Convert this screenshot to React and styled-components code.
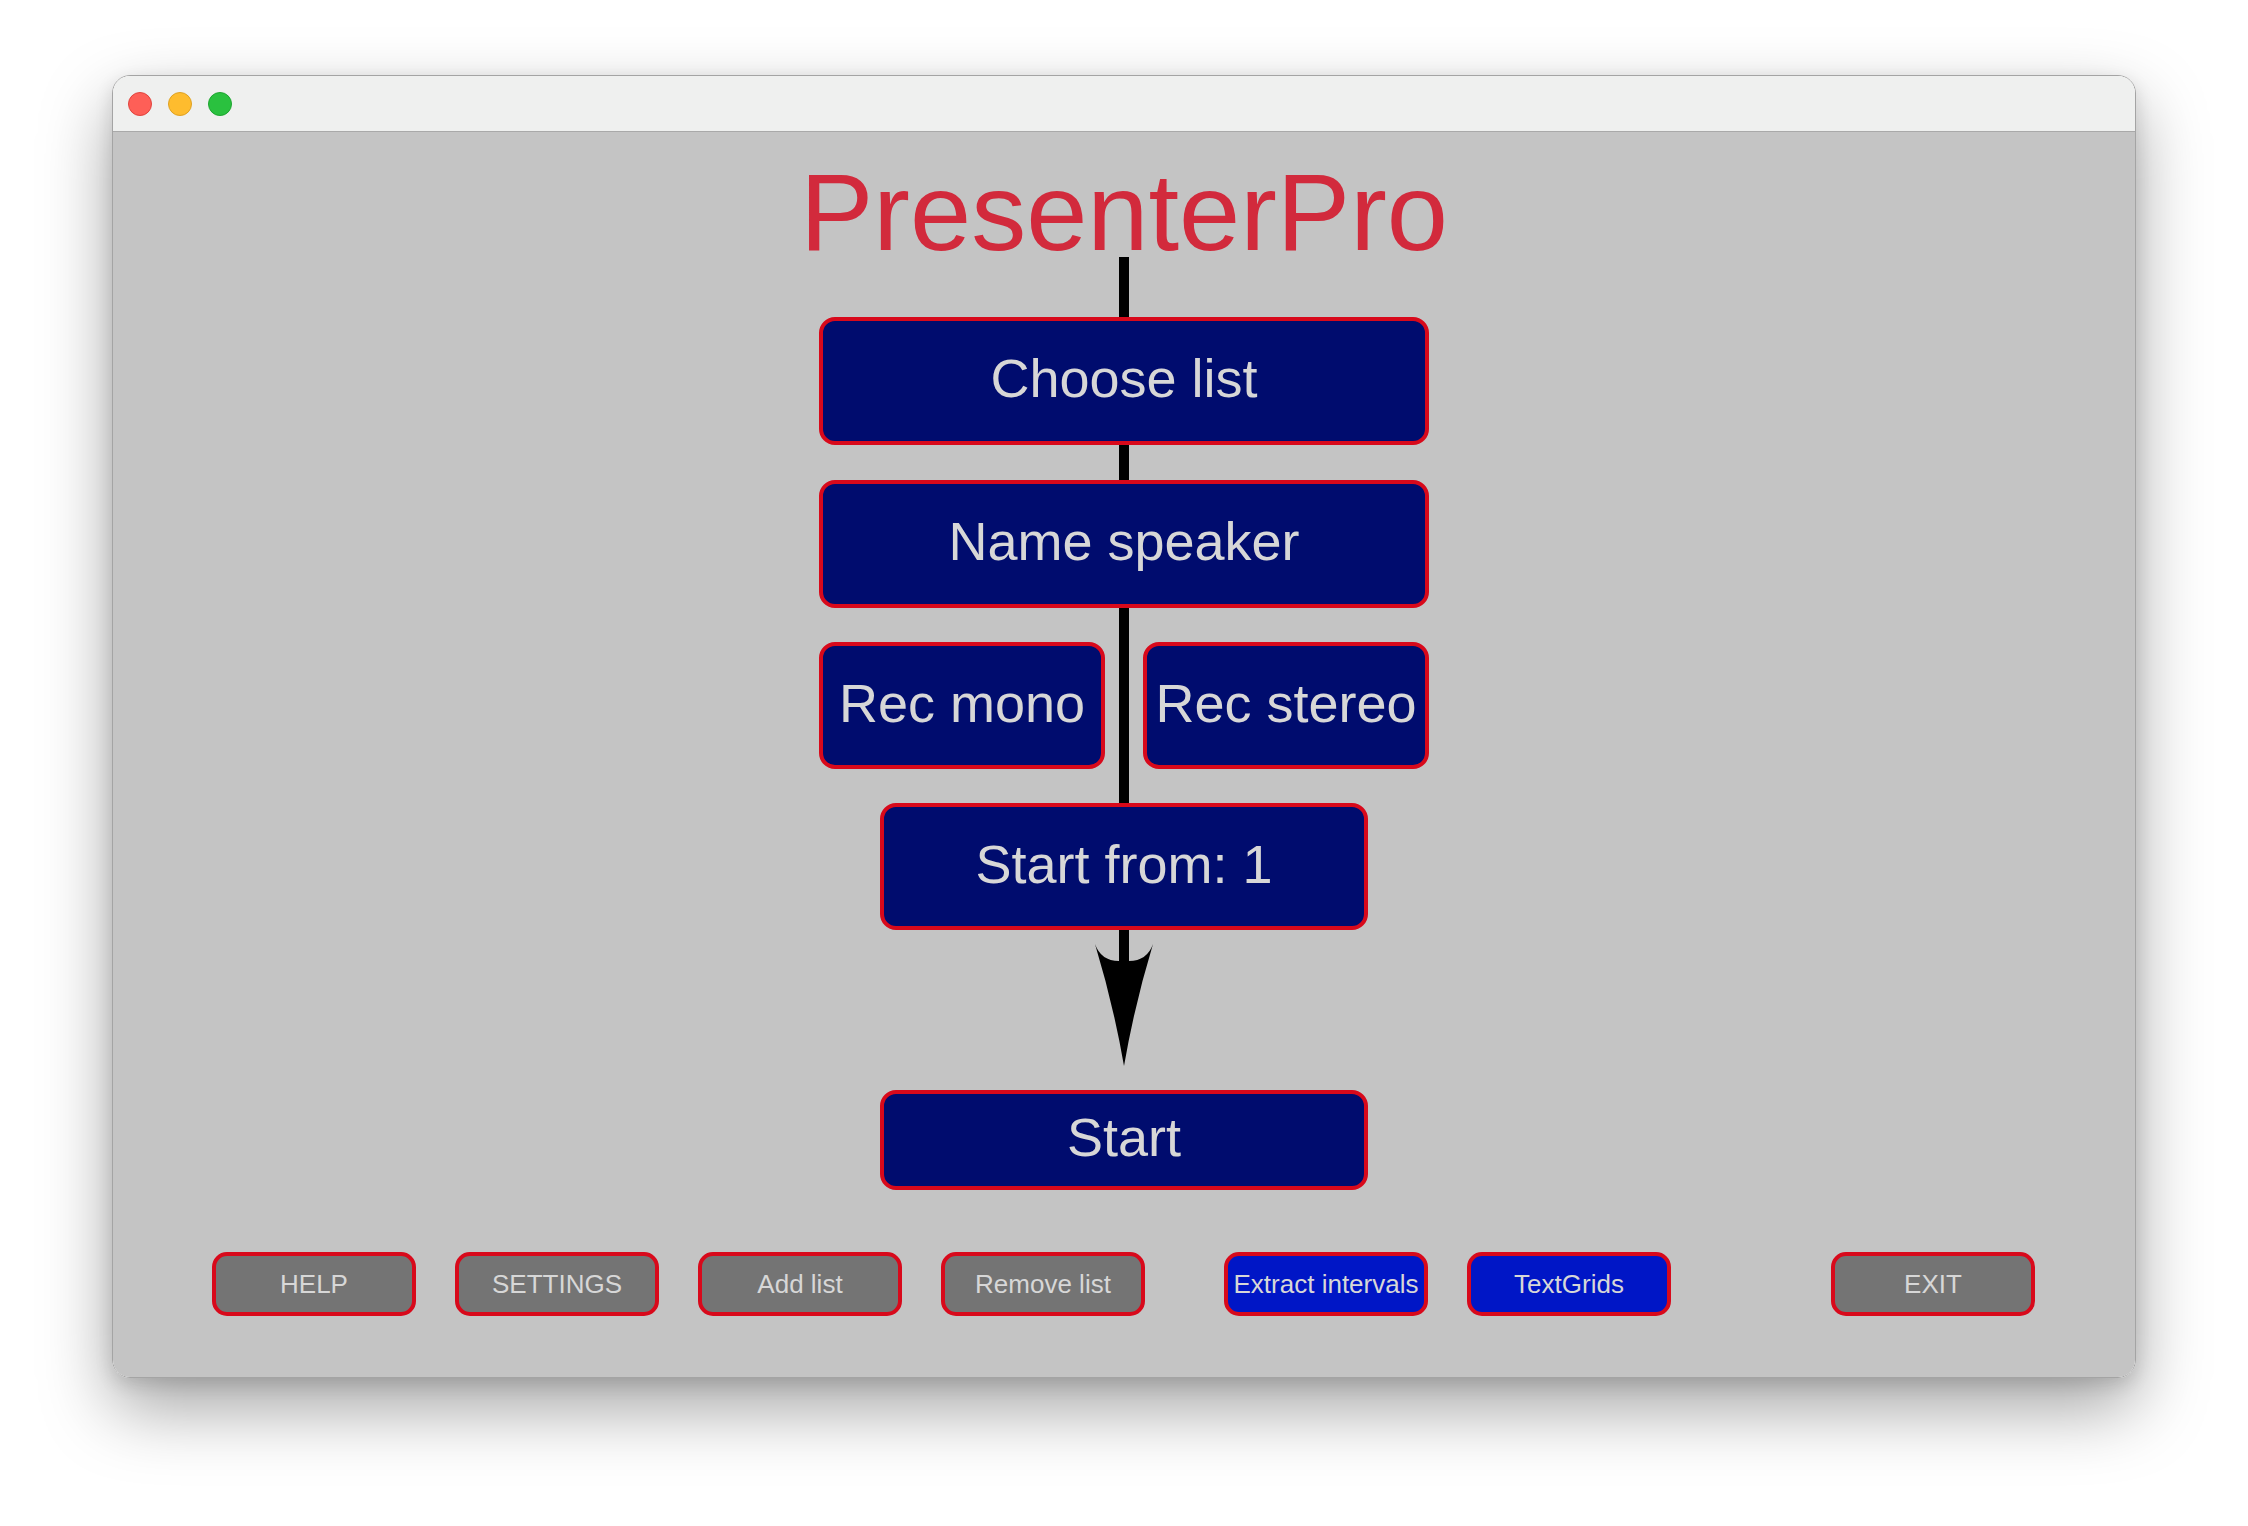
import React from 'react';
import styled, { createGlobalStyle } from 'styled-components';

const GlobalStyle = createGlobalStyle`
  html, body {
    margin: 0;
    padding: 0;
    background: #ffffff;
  }
  body {
    font-family: 'Liberation Sans', Arial, sans-serif;
  }
`;

const Page = styled.div`
  padding: 75px 0 148px 112px;
`;

const Window = styled.div`
  width: 2024px;
  height: 1303px;
  box-sizing: border-box;
  border: 1px solid #a4a4a4;
  border-radius: 18px;
  overflow: hidden;
  display: flex;
  flex-direction: column;
  box-shadow: 0 30px 70px rgba(0, 0, 0, 0.36), 0 6px 18px rgba(0, 0, 0, 0.12);
`;

const TitleBar = styled.div`
  height: 55px;
  flex: none;
  display: flex;
  align-items: center;
  gap: 16px;
  padding-left: 15px;
  background: #eff0ef;
  border-bottom: 1px solid #a9a9a9;
`;

const Light = styled.span`
  width: 24px;
  height: 24px;
  border-radius: 50%;
  box-sizing: border-box;
  background: ${(p) => p.$color};
  border: 1px solid ${(p) => p.$edge};
`;

const Content = styled.div`
  flex: 1;
  background: #c4c4c4;
  display: flex;
  flex-direction: column;
  align-items: center;
  padding-top: 35px;
`;

const Title = styled.h1`
  margin: 0;
  font-size: 110px;
  line-height: 90px;
  font-weight: 400;
  color: #d22a3c;
  white-space: nowrap;
`;

const Connector = styled.div`
  width: 10px;
  height: ${(p) => (p.$h ? `${p.$h}px` : 'auto')};
  align-self: ${(p) => (p.$h ? 'center' : 'stretch')};
  background: #000;
  flex: none;
`;

const FlowButton = styled.button`
  width: ${(p) => p.$w}px;
  height: ${(p) => p.$h}px;
  box-sizing: border-box;
  flex: none;
  margin: 0;
  padding: 0 0 6px;
  display: flex;
  align-items: center;
  justify-content: center;
  background: #000c6e;
  border: 4px solid #d8091b;
  border-radius: 16px;
  color: #d7d7d7;
  font-family: inherit;
  font-size: 54px;
  white-space: nowrap;
  cursor: pointer;
`;

const RecRow = styled.div`
  width: 610px;
  display: flex;
  gap: 14px;
`;

const Arrow = styled.svg`
  display: block;
  flex: none;
  margin-bottom: 24px;
`;

const BottomRow = styled.div`
  align-self: stretch;
  display: flex;
  padding-left: 99px;
  margin-top: 62px;
`;

const SmallButton = styled.button`
  width: 204px;
  height: 64px;
  box-sizing: border-box;
  margin: 0 0 0 ${(p) => p.$offset || 0}px;
  padding: 0;
  display: flex;
  align-items: center;
  justify-content: center;
  background: ${(p) => (p.$blue ? '#0016c6' : '#747474')};
  border: 4px solid #d8091b;
  border-radius: 15px;
  color: #d7d7d7;
  font-family: inherit;
  font-size: 26px;
  white-space: nowrap;
  cursor: pointer;
`;

const bottomButtons = [
  { label: 'HELP', offset: 0 },
  { label: 'SETTINGS', offset: 39 },
  { label: 'Add list', offset: 39 },
  { label: 'Remove list', offset: 39 },
  { label: 'Extract intervals', offset: 79, blue: true },
  { label: 'TextGrids', offset: 39, blue: true },
  { label: 'EXIT', offset: 160 },
];

const App = () => (
  <Page>
    <GlobalStyle />
    <Window>
      <TitleBar>
        <Light $color="#fe5f57" $edge="#e0443e" />
        <Light $color="#febc2e" $edge="#dea123" />
        <Light $color="#2ac13f" $edge="#1ea530" />
      </TitleBar>
      <Content>
        <Title>PresenterPro</Title>
        <Connector $h={60} />
        <FlowButton $w={610} $h={128}>Choose list</FlowButton>
        <Connector $h={35} />
        <FlowButton $w={610} $h={128}>Name speaker</FlowButton>
        <Connector $h={34} />
        <RecRow>
          <FlowButton $w={286} $h={127}>Rec mono</FlowButton>
          <Connector />
          <FlowButton $w={286} $h={127}>Rec stereo</FlowButton>
        </RecRow>
        <Connector $h={34} />
        <FlowButton $w={488} $h={127}>Start from: 1</FlowButton>
        <Arrow width="58" height="136" viewBox="0 0 58 136">
          <rect x="24" y="0" width="10" height="32" fill="#000" />
          <path
            d="M0 14 Q6 31 24 31 L34 31 Q52 31 58 14 Q39.5 75 29 136 Q18.5 75 0 14 Z"
            fill="#000"
          />
        </Arrow>
        <FlowButton $w={488} $h={100}>Start</FlowButton>
        <BottomRow>
          {bottomButtons.map((b) => (
            <SmallButton key={b.label} $offset={b.offset} $blue={b.blue}>
              {b.label}
            </SmallButton>
          ))}
        </BottomRow>
      </Content>
    </Window>
  </Page>
);

export default App;
